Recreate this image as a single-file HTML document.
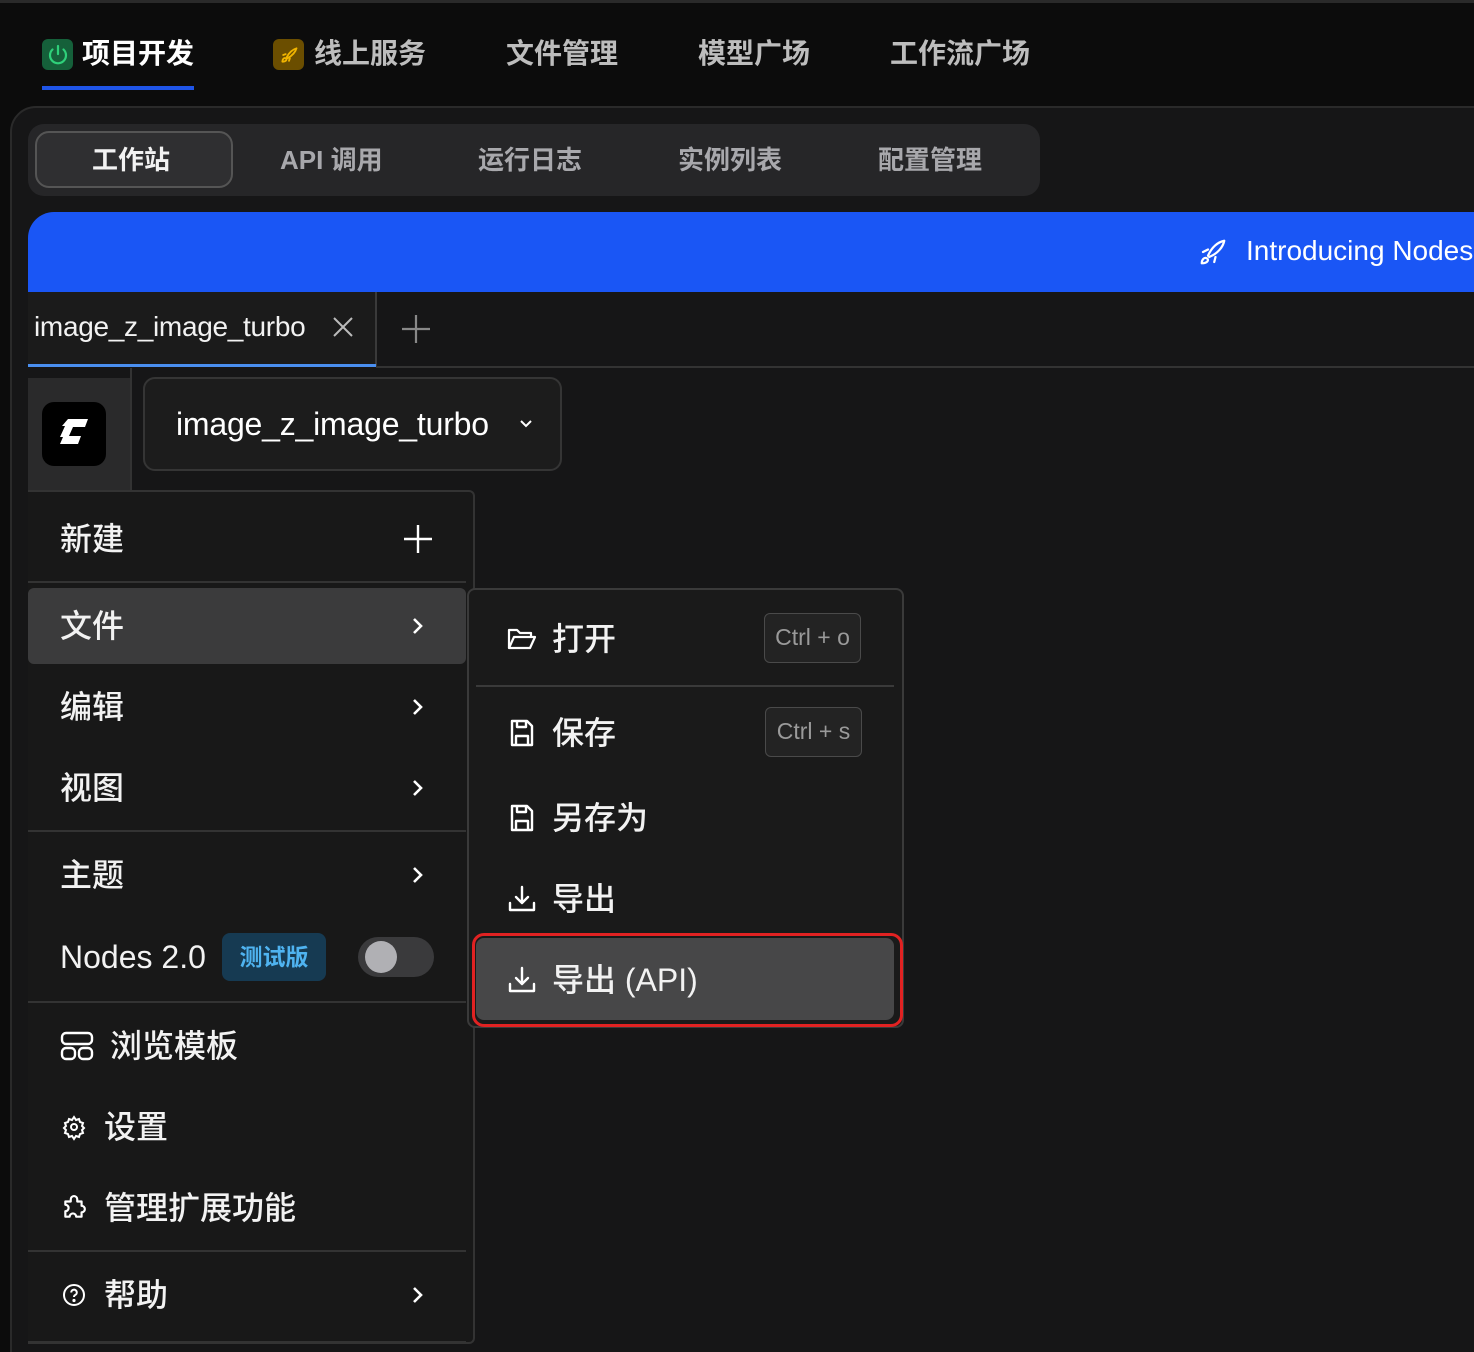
<!DOCTYPE html>
<html><head><meta charset="utf-8"><style>
*{margin:0;padding:0;box-sizing:border-box}
html,body{width:1474px;height:1352px;overflow:hidden}
body{background:#0c0c0c;position:relative;font-family:"Liberation Sans","Noto Sans CJK SC",sans-serif;color:#fff}
.a{position:absolute}
.nav{top:32px;font-size:28px;font-weight:bold;color:#bdbdbd;line-height:44px}
.sub{top:138px;font-size:26px;font-weight:bold;color:#a8a8ac;line-height:44px}
.mi{position:absolute;left:60px;font-size:32px;line-height:40px;color:#f2f2f2;font-weight:500}
.chev{position:absolute;left:408px;width:20px;height:20px}
.div{position:absolute;left:28px;width:438px;height:2px;background:#333}
.si{position:absolute;left:552px;font-size:32px;line-height:40px;color:#f2f2f2;font-weight:500}
.kbd{position:absolute;left:764px;width:97px;height:50px;border:1.5px solid #4a4a4a;border-radius:6px;background:#232323;color:#9a9a9a;font-size:23px;line-height:47px;text-align:center}
svg{overflow:visible}
</style></head><body>
<div class="a" style="left:0;top:0;width:1474px;height:3px;background:#2a2a2a"></div>
<div class="a" style="left:42px;top:39px;width:31px;height:31px;background:#15603a;border-radius:6px"></div>
<svg class="a" style="left:46px;top:43px" width="24" height="24" viewBox="0 0 24 24" fill="none" stroke="#2fd07a" stroke-width="2.2" stroke-linecap="round"><path d="M12 3v8"/><path d="M6.5 6.5a8 8 0 1 0 11 0"/></svg>
<div class="a nav" style="left:82px;color:#fff">项目开发</div>
<div class="a" style="left:42px;top:86px;width:152px;height:4px;background:#1f55e8"></div>
<div class="a" style="left:273px;top:39px;width:31px;height:31px;background:#6b4e00;border-radius:6px"></div>
<svg class="a" style="left:279px;top:45px" width="20" height="20" viewBox="0 0 24 24" fill="none" stroke="#f0b400" stroke-width="2.2" stroke-linecap="round" stroke-linejoin="round"><path d="M4 20c0-3 2-5 4-4s1 4-4 4z"/><path d="M9 15c3-6 8-10 12-11-1 4-5 9-11 12z"/><path d="M8 11l-3 1M13 16l-1 3"/></svg>
<div class="a nav" style="left:314px">线上服务</div>
<div class="a nav" style="left:506px">文件管理</div>
<div class="a nav" style="left:698px">模型广场</div>
<div class="a nav" style="left:890px">工作流广场</div>
<div class="a" style="left:10px;top:106px;width:1480px;height:1260px;background:#161617;border:2px solid #2a2a2a;border-radius:26px 0 0 0"></div>
<div class="a" style="left:28px;top:124px;width:1012px;height:72px;background:#262628;border-radius:16px"></div>
<div class="a" style="left:35px;top:131px;width:198px;height:57px;background:#2f2f31;border:2px solid #555;border-radius:14px"></div>
<div class="a sub" style="left:92px;color:#f2f2f2">工作站</div>
<div class="a sub" style="left:280px">API 调用</div>
<div class="a sub" style="left:478px">运行日志</div>
<div class="a sub" style="left:678px">实例列表</div>
<div class="a sub" style="left:878px">配置管理</div>
<div class="a" style="left:28px;top:212px;width:1446px;height:80px;background:#1a56f5;border-radius:26px 0 0 0"></div>
<svg class="a" style="left:1198px;top:237px" width="30" height="30" viewBox="0 0 24 24" fill="none" stroke="#fff" stroke-width="1.8" stroke-linecap="round" stroke-linejoin="round"><path d="M3 21c0-3 2-5 4-4s1 4-4 4z"/><path d="M8 15c3-7 8-11 13-12-1 5-5 10-12 13z"/><path d="M8 10l-4 2M14 16l-1 4"/></svg>
<div class="a" style="left:1246px;top:233px;font-size:28px;line-height:36px;color:#fff;white-space:nowrap">Introducing Nodes</div>
<div class="a" style="left:28px;top:292px;width:348px;height:75px;background:#1b1b1b"></div>
<div class="a" style="left:375px;top:292px;width:2px;height:75px;background:#3a3a3a"></div>
<div class="a" style="left:34px;top:309px;font-size:28px;line-height:36px;color:#f2f2f2;letter-spacing:-0.3px">image_z_image_turbo</div>
<svg class="a" style="left:332px;top:316px" width="22" height="22" viewBox="0 0 22 22" stroke="#bbb" stroke-width="2"><path d="M2 2l18 18M20 2L2 20"/></svg>
<svg class="a" style="left:400px;top:313px" width="32" height="32" viewBox="0 0 32 32" stroke="#888" stroke-width="2.2"><path d="M16 2v28M2 16h28"/></svg>
<div class="a" style="left:28px;top:364px;width:348px;height:3px;background:#4a8ff0"></div>
<div class="a" style="left:376px;top:366px;width:1100px;height:2px;background:#333"></div>
<div class="a" style="left:28px;top:378px;width:102px;height:114px;background:#2a2a2b"></div>
<div class="a" style="left:130px;top:368px;width:2px;height:124px;background:#333"></div>
<div class="a" style="left:42px;top:402px;width:64px;height:64px;background:#000;border-radius:12px"></div>
<svg class="a" style="left:54px;top:414px" width="40" height="40" viewBox="0 0 40 40"><path d="M14 5h20l-3 8H19l-4 9h12l-3 8H6l3-7-3 0 5-11h-3z" fill="#fff"/></svg>
<div class="a" style="left:143px;top:377px;width:419px;height:94px;background:#1c1c1c;border:2px solid #353535;border-radius:12px"></div>
<div class="a" style="left:176px;top:404px;font-size:32px;line-height:40px;color:#fff;letter-spacing:-0.2px">image_z_image_turbo</div>
<svg class="a" style="left:518px;top:418px" width="16" height="12" viewBox="0 0 16 12" fill="none" stroke="#fff" stroke-width="2"><path d="M3 3l5 5 5-5"/></svg>
<div class="a" style="left:28px;top:490px;width:447px;height:854px;background:#181818;border:2px solid #333;border-left:none;border-radius:0 6px 6px 0"></div>
<div class="mi" style="top:519px">新建</div>
<svg class="a" style="left:402px;top:523px" width="32" height="32" viewBox="0 0 32 32" stroke="#fff" stroke-width="2.4"><path d="M16 2v28M2 16h28"/></svg>
<div class="div" style="top:581px"></div>
<div class="a" style="left:28px;top:588px;width:438px;height:76px;background:#3b3b3c;border-radius:6px"></div>
<div class="mi" style="top:606px">文件</div>
<svg class="chev" style="top:616px" viewBox="0 0 20 20" fill="none" stroke="#fff" stroke-width="2.6"><path d="M6 3l7 7-7 7"/></svg>
<div class="mi" style="top:687px">编辑</div>
<svg class="chev" style="top:697px" viewBox="0 0 20 20" fill="none" stroke="#fff" stroke-width="2.6"><path d="M6 3l7 7-7 7"/></svg>
<div class="mi" style="top:768px">视图</div>
<svg class="chev" style="top:778px" viewBox="0 0 20 20" fill="none" stroke="#fff" stroke-width="2.6"><path d="M6 3l7 7-7 7"/></svg>
<div class="div" style="top:830px"></div>
<div class="mi" style="top:855px">主题</div>
<svg class="chev" style="top:865px" viewBox="0 0 20 20" fill="none" stroke="#fff" stroke-width="2.6"><path d="M6 3l7 7-7 7"/></svg>
<div class="mi" style="top:937px">Nodes 2.0</div>
<div class="a" style="left:222px;top:933px;width:104px;height:48px;background:#163a52;border-radius:8px;color:#4fb3f0;font-size:23px;font-weight:bold;line-height:48px;text-align:center">测试版</div>
<div class="a" style="left:358px;top:937px;width:76px;height:40px;background:#3a3a3c;border-radius:20px"></div>
<div class="a" style="left:365px;top:941px;width:32px;height:32px;background:#b0b0b4;border-radius:50%"></div>
<div class="div" style="top:1001px"></div>
<svg class="a" style="left:60px;top:1031px" width="34" height="30" viewBox="0 0 34 30" fill="none" stroke="#fff" stroke-width="2.4"><rect x="2" y="2" width="30" height="11" rx="4"/><rect x="2" y="17" width="13" height="11" rx="4"/><rect x="19" y="17" width="13" height="11" rx="4"/></svg>
<div class="mi" style="top:1026px;left:110px">浏览模板</div>
<svg class="a" style="left:62px;top:1115px" width="24" height="24" viewBox="0 0 24 24" fill="none" stroke="#fff" stroke-width="2"><circle cx="12" cy="12" r="3"/><path d="M12 2l2 3 3-1 1 3 3 1-1 3 2 2-2 2 1 3-3 1-1 3-3-1-2 3-2-3-3 1-1-3-3-1 1-3-2-2 2-2-1-3 3-1 1-3 3 1z"/></svg>
<div class="mi" style="top:1107px;left:104px">设置</div>
<svg class="a" style="left:61px;top:1195px" width="26" height="26" viewBox="0 0 24 24" fill="none" stroke="#fff" stroke-width="2" stroke-linejoin="round"><path d="M9 4a3 3 0 0 1 6 0v2h4v4a3 3 0 0 1 0 6v4h-5a3 3 0 0 0-6 0H4v-5a3 3 0 0 0 0-6V6h5z"/></svg>
<div class="mi" style="top:1188px;left:104px">管理扩展功能</div>
<div class="div" style="top:1250px"></div>
<svg class="a" style="left:62px;top:1283px" width="24" height="24" viewBox="0 0 24 24" fill="none" stroke="#fff" stroke-width="2"><circle cx="12" cy="12" r="10"/><path d="M9.2 9.5a2.8 2.8 0 1 1 4 2.5c-1 .5-1.2 1.2-1.2 2"/><circle cx="12" cy="17.5" r=".6" fill="#fff"/></svg>
<div class="mi" style="top:1275px;left:104px">帮助</div>
<svg class="chev" style="top:1285px" viewBox="0 0 20 20" fill="none" stroke="#fff" stroke-width="2.6"><path d="M6 3l7 7-7 7"/></svg>
<div class="div" style="top:1341px"></div>
<div class="a" style="left:467px;top:588px;width:437px;height:440px;background:#1a1a1a;border:2px solid #3a3a3a;border-radius:8px"></div>
<svg class="a" style="left:507px;top:626px" width="30" height="26" viewBox="0 0 30 26" fill="none" stroke="#fff" stroke-width="2.2" stroke-linejoin="round"><path d="M2 22V4h8l3 3h11v4"/><path d="M2 22l5-11h21l-5 11z"/></svg>
<div class="si" style="top:619px">打开</div>
<div class="kbd" style="top:613px">Ctrl + o</div>
<div class="a" style="left:476px;top:685px;width:418px;height:2px;background:#3a3a3a"></div>
<svg class="a" style="left:509px;top:718px" width="26" height="30" viewBox="0 0 26 30" fill="none" stroke="#fff" stroke-width="2.4" stroke-linejoin="round"><path d="M3 3h15l5 5v19H3z"/><path d="M8 3v6h9V3M7 27v-9h12v9"/></svg>
<div class="si" style="top:713px">保存</div>
<div class="kbd" style="top:707px;left:765px">Ctrl + s</div>
<svg class="a" style="left:509px;top:803px" width="26" height="30" viewBox="0 0 26 30" fill="none" stroke="#fff" stroke-width="2.4" stroke-linejoin="round"><path d="M3 3h15l5 5v19H3z"/><path d="M8 3v6h9V3M7 27v-9h12v9"/></svg>
<div class="si" style="top:798px">另存为</div>
<svg class="a" style="left:507px;top:884px" width="30" height="30" viewBox="0 0 30 30" fill="none" stroke="#fff" stroke-width="2.4" stroke-linecap="round" stroke-linejoin="round"><path d="M15 3v16M9 13l6 6 6-6M3 19v7h24v-7"/></svg>
<div class="si" style="top:879px">导出</div>
<div class="a" style="left:476px;top:938px;width:418px;height:82px;background:#474748;border-radius:8px"></div>
<div class="a" style="left:472px;top:933px;width:431px;height:94px;border:3px solid #e12222;border-radius:12px"></div>
<svg class="a" style="left:507px;top:965px" width="30" height="30" viewBox="0 0 30 30" fill="none" stroke="#fff" stroke-width="2.4" stroke-linecap="round" stroke-linejoin="round"><path d="M15 3v16M9 13l6 6 6-6M3 19v7h24v-7"/></svg>
<div class="si" style="top:960px">导出 (API)</div>
</body></html>
